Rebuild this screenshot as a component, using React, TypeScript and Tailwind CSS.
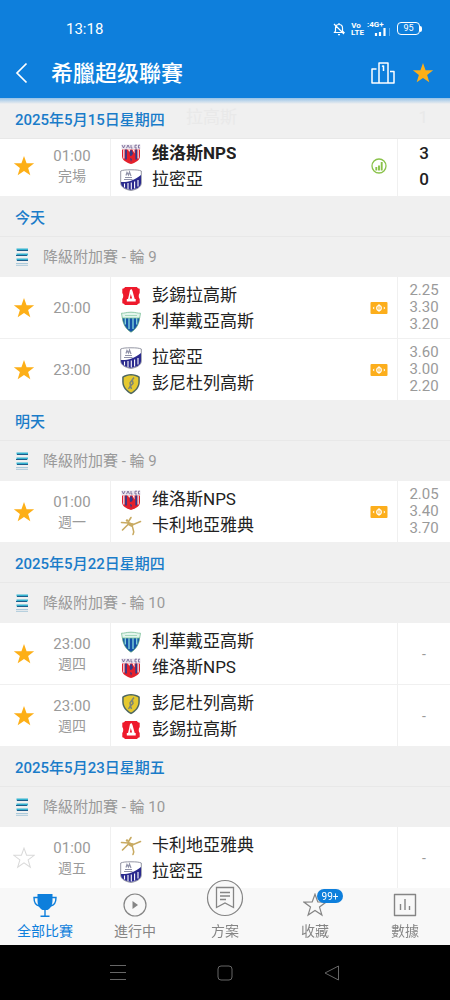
import type { ReactNode } from "react";

type TeamId = "volos" | "lamia" | "panserraikos" | "levadiakos" | "panetolikos" | "kallithea";

interface Match {
  time: string;
  note?: string;
  home: TeamId;
  away: TeamId;
  starred: boolean;
  score?: [number, number];
  odds?: [string, string, string];
}

interface Section {
  date: string;
  round?: string;
  matches: Match[];
}

const TEAM_NAMES: Record<TeamId, string> = {
  volos: "维洛斯NPS",
  lamia: "拉密亞",
  panserraikos: "彭錫拉高斯",
  levadiakos: "利華戴亞高斯",
  panetolikos: "彭尼杜列高斯",
  kallithea: "卡利地亞雅典",
};

const SECTIONS: Section[] = [
  {
    date: "2025年5月15日星期四",
    matches: [{ time: "01:00", note: "完場", home: "volos", away: "lamia", starred: true, score: [3, 0] }],
  },
  {
    date: "今天",
    round: "降級附加賽 - 輪 9",
    matches: [
      { time: "20:00", home: "panserraikos", away: "levadiakos", starred: true, odds: ["2.25", "3.30", "3.20"] },
      { time: "23:00", home: "lamia", away: "panetolikos", starred: true, odds: ["3.60", "3.00", "2.20"] },
    ],
  },
  {
    date: "明天",
    round: "降級附加賽 - 輪 9",
    matches: [
      { time: "01:00", note: "週一", home: "volos", away: "kallithea", starred: true, odds: ["2.05", "3.40", "3.70"] },
    ],
  },
  {
    date: "2025年5月22日星期四",
    round: "降級附加賽 - 輪 10",
    matches: [
      { time: "23:00", note: "週四", home: "levadiakos", away: "volos", starred: true },
      { time: "23:00", note: "週四", home: "panetolikos", away: "panserraikos", starred: true },
    ],
  },
  {
    date: "2025年5月23日星期五",
    round: "降級附加賽 - 輪 10",
    matches: [{ time: "01:00", note: "週五", home: "kallithea", away: "lamia", starred: false }],
  },
];

const STAR_PATH = "M12 1.2l2.8 7.700 8.300.2-6.600 5 2.400 8L12 17.400l-6.900 4.700 2.400-8-6.600-5 8.300-.2z";

function Star({ filled }: { filled: boolean }) {
  return (
    <svg viewBox="0 0 24 24" className="size-[22px]">
      <path d={STAR_PATH} fill={filled ? "#fdaf17" : "none"} stroke={filled ? "none" : "#d9d9d9"} strokeWidth="1.1" />
    </svg>
  );
}

function Crest({ team }: { team: TeamId }) {
  switch (team) {
    case "volos":
      return (
        <svg viewBox="0 0 22 22" className="size-[22px]">
          <path d="M1.500 1.500h19v4.500h-19z" fill="#ebe6ef" />
          <path d="M2 2l1.500 3L5 2M6.500 5.200L8 2l1.500 3.200M11 2v3h1.500M17 2.200h-2V5h2M20 2.200h-1.500V5H20" fill="none" stroke="#6a5a8c" strokeWidth=".8" />
          <path d="M2 6.500h18V13c0 4-4 6.500-9 8-5-1.500-9-4-9-8z" fill="#e3202c" />
          <path d="M3.800 6.500v9M18.200 6.500v9" stroke="#e9e2ef" strokeWidth="1.300" />
          <path d="M6 6.500v10M16.200 6.500v10" stroke="#2a3c8c" strokeWidth="1.700" />
          <path d="M8 6.500h2l-.5 3zM12.500 6.500H14.500v4z" fill="#fff" />
          <path d="M9.500 8.500l2-2 1.500 4-1 2-2 .5zM10 15l2 1-1 3z" fill="#343a86" />
        </svg>
      );
    case "lamia":
      return (
        <svg viewBox="0 0 22 22" className="size-[22px]">
          <path d="M.7 2C3 1 6 .8 11 .8s8 .2 10.300 1.200v12c0 4-4.500 6.500-10.300 7.500C5.200 20.500.7 18 .7 14z" fill="#fff" stroke="#888a98" strokeWidth=".9" />
          <path d="M21 6v8c0 4-4.500 6-10 7-5.500-1-10-3-10-7v-1c6 .5 13-1.500 20-7z" fill="#2a2a8e" />
          <path d="M4.500 14.500v4M8 14v6M11.300 13.500v7M14.600 12.500v7M18 11v6.500" stroke="#fff" strokeWidth="1.100" />
          <path d="M4 10.500h8.500M5 8.500h7M6 6.500l1-3 1.500 2.500 1-3 1.500 4" stroke="#9092a8" fill="none" strokeWidth="1.200" />
        </svg>
      );
    case "panserraikos":
      return (
        <svg viewBox="0 0 22 22" className="size-[22px]">
          <path d="M5 2h12c.5 1 1.300 1.500 2.700 1.800V8c-1.300 1.500-1.300 4.500 0 6v4.200c-1.400.3-2.200.8-2.700 1.800H5c-.5-1-1.300-1.500-2.700-1.800V14c1.300-1.500 1.300-4.500 0-6V3.800C3.700 3.500 4.500 3 5 2z" fill="#ee1a2c" />
          <path d="M10 5l1.500-1 1 2 2.200 8h1v2.500H6.800V14H8l1-4z" fill="#fff" />
          <path d="M10.800 9l1.300 4.500H9.800z" fill="#ee1a2c" />
        </svg>
      );
    case "levadiakos":
      return (
        <svg viewBox="0 0 22 22" className="size-[22px]">
          <path d="M2.500 6h17c0 6-3 12-8.500 15.200C5.500 18 2.500 12 2.500 6z" fill="#1553a8" stroke="#4b9a6c" strokeWidth=".7" />
          <path d="M5.300 7v6.500M9 7v11M13 7v11M16.700 7v6.500" stroke="#7fd0d8" strokeWidth="1.400" />
          <path d="M1.500 2.200C4 2.500 6 1.200 11 1.200s7 1.300 9.500 1l-.8 4.800H2.300z" fill="#e3f5ec" stroke="#7abf98" strokeWidth=".8" />
          <path d="M5 4.500h12" stroke="#a5d8bd" />
        </svg>
      );
    case "panetolikos":
      return (
        <svg viewBox="0 0 22 22" className="size-[22px]">
          <path d="M11 1C14 1 17.500 1.800 19.800 3.800V9c0 5.500-3.800 9.500-8.800 12.200C6 18.500 2.200 14.500 2.200 9V3.800C4.500 1.800 8 1 11 1z" fill="#4d6660" />
          <path d="M11 2.400c2.600 0 5.500.6 7.300 2.100V9c0 4.700-3.200 8.200-7.300 10.600C6.900 17.200 3.700 13.700 3.700 9V4.500C5.500 3 8.400 2.400 11 2.400z" fill="#e5c92f" />
          <path d="M14 4.500l-1.500 2-2.500 3.500.5 2.500L8.500 16M12.500 7.500l.5 3-2.500 2.500 1 3" fill="none" stroke="#7d8676" strokeWidth="1.500" />
        </svg>
      );
    case "kallithea":
      return (
        <svg viewBox="0 0 22 22" className="size-[22px]">
          <path d="M8.500 6.500L11 2.500M1.500 7.500l7 .5 5 1.500 7-3M8.500 9l-6 6M12.500 9.500c-1.500 3.500 3 5 .5 10" fill="none" stroke="#c8aa62" strokeWidth="1.600" strokeLinecap="round" />
          <path d="M7 6.500l7.500 2.500-3 3-3.500-2z" fill="#c8aa62" />
          <circle cx="7" cy="5.500" r="1.200" fill="#c8aa62" />
        </svg>
      );
  }
}

function StageLogo() {
  return (
    <svg viewBox="0 0 14 18" className="h-[18px] w-3.5">
      <path d="M1.500 1.500h11.500M1.500 6.500h11.500M1.500 11.500h11.500" stroke="#35b3d0" strokeWidth="2.200" />
      <path d="M2 2.500h11M1 7.500h11M2 12.500h11" stroke="#1f5c8a" strokeWidth="1" />
      <path d="M1 15.500h12M1 17.300h12" stroke="#a9c9da" strokeWidth="1" />
    </svg>
  );
}

function StatsIcon() {
  return (
    <svg viewBox="0 0 16 16" className="size-4">
      <circle cx="8" cy="8" r="7" fill="none" stroke="#8ac24a" strokeWidth="1.300" />
      <path d="M5.300 9v3.500M8 7.500v5M10.700 4v8.500" stroke="#8ac24a" strokeWidth="1.900" />
    </svg>
  );
}

function OddsIcon() {
  return (
    <svg viewBox="0 0 18 14" className="h-3.5 w-[18px]">
      <rect x=".5" y="1" width="17" height="12" rx="1" fill="#fcae1c" />
      <ellipse cx="9" cy="7" rx="2.300" ry="2.500" fill="none" stroke="#fff" strokeWidth="1.200" />
      <path d="M9 3v8" stroke="#fff" />
      <path d="M4.200 5.500L2.700 7l1.500 1.500zM13.800 5.500L15.300 7l-1.500 1.500z" fill="#fff" />
    </svg>
  );
}

function MatchRow({ match }: { match: Match }) {
  return (
    <li className="flex h-[62px] items-stretch border-b border-[#f0f0f0] bg-white">
      <div className="flex w-[111px] shrink-0 items-center border-r border-[#f0f0f0]">
        <button type="button" aria-label="收藏" aria-pressed={match.starred} className="flex w-12 justify-center">
          <Star filled={match.starred} />
        </button>
        <div className="w-12 text-center text-[#9a9a9a]">
          <div className="text-[15px] leading-5">{match.time}</div>
          {match.note && <div className="text-sm leading-5">{match.note}</div>}
        </div>
      </div>
      <div className="flex min-w-0 flex-1 flex-col justify-center pt-0.5 pl-[9px] text-[17px] text-[#222]">
        {[match.home, match.away].map((team, i) => (
          <div key={team} className="flex h-[26px] items-center gap-2.5">
            <Crest team={team} />
            <span className={match.score && i === 0 ? "truncate font-bold" : "truncate"}>{TEAM_NAMES[team]}</span>
          </div>
        ))}
      </div>
      <div className="flex w-9 shrink-0 items-center justify-center">
        {match.score && <StatsIcon />}
        {match.odds && <OddsIcon />}
      </div>
      <div className="flex w-[53px] shrink-0 flex-col items-center justify-center border-l border-[#f0f0f0]">
        {match.score?.map((goals, i) => (
          <span key={i} className="text-[17px] leading-[26px] font-medium text-[#222]">{goals}</span>
        ))}
        {match.odds?.map((value) => (
          <span key={value} className="text-[15px] leading-[17px] text-[#9a9a9a]">{value}</span>
        ))}
        {!match.score && !match.odds && <span className="text-sm text-[#9a9a9a]">-</span>}
      </div>
    </li>
  );
}

function StatusBar() {
  return (
    <div className="flex h-[57px] items-center justify-between pr-[28px] pl-[66px]">
      <span className="pt-0.5 text-[15px]">13:18</span>
      <div className="flex items-center gap-1.5">
        <svg viewBox="0 0 12 14" className="h-3.5 w-3">
          <path d="M1.500 10.500h9.500L9.500 9V6C9.500 4 8 2.500 6 2.500S2.500 4 2.500 6v3zM5 12.700h2M6 1v1.500M1 2l10 10" fill="none" stroke="currentColor" strokeWidth="1.200" />
        </svg>
        <span className="flex w-2.5 flex-col text-center text-[8px] leading-[7px] font-bold">
          <span>Vo</span>
          <span>LTE</span>
        </span>
        <div className="flex w-6 flex-col">
          <span className="text-[8px] leading-[7px] font-bold">:4G+</span>
          <svg viewBox="0 0 24 8" className="h-2 w-6">
            <path d="M9 8V5M13 8V4M17.500 8V0" stroke="currentColor" strokeWidth="2.200" />
            <path d="M22.500 8V0" stroke="#5aa8ea" />
          </svg>
        </div>
        <span className="flex items-center">
          <span className="flex h-[13px] w-[23px] items-center justify-center rounded-[4px] border border-white text-[9px]">95</span>
          <span className="h-1.5 w-0.5 rounded-r-sm bg-white" />
        </span>
      </div>
    </div>
  );
}

function TitleBar() {
  return (
    <div className="flex h-8 items-center pr-4 pl-3">
      <button type="button" aria-label="返回" className="w-[39px]">
        <svg viewBox="0 0 20 24" className="h-6 w-5">
          <path d="M14.500 2.500L5 12l9.500 9.500" fill="none" stroke="currentColor" strokeWidth="1.700" />
        </svg>
      </button>
      <h1 className="flex-1 text-[22px] font-medium">希臘超级聯賽</h1>
      <button type="button" aria-label="積分榜" className="mr-4">
        <svg viewBox="0 0 26 24" className="h-6 w-[26px]">
          <path d="M9 22V2h9v20M6.500 8H2v14h22V10.500h-4M13.500 4.500V10M13.500 4.500L12 5.500" fill="none" stroke="currentColor" strokeWidth="1.500" strokeLinejoin="round" />
        </svg>
      </button>
      <button type="button" aria-label="收藏聯賽">
        <Star filled />
      </button>
    </div>
  );
}

function Tab({ label, active, children }: { label: string; active?: boolean; children: ReactNode }) {
  return (
    <a
      href="#"
      aria-current={active ? "page" : undefined}
      className={
        active
          ? "flex h-[57px] flex-col items-center justify-end gap-1 pb-1 text-[#0e7fdc]"
          : "flex h-[57px] flex-col items-center justify-end gap-1 pb-1 text-[#858585]"
      }
    >
      {children}
      <span className="text-sm leading-5">{label}</span>
    </a>
  );
}

function TabBar() {
  return (
    <nav className="relative z-10 grid shrink-0 grid-cols-5 bg-[#f8f8f8]">
      <Tab label="全部比賽" active>
        <svg viewBox="0 0 24 24" className="size-6">
          <path d="M4.500 1h15v6c0 5-1.500 8-5 10h-5c-3.500-2-5-5-5-10z" fill="currentColor" />
          <path d="M5 4.500H1c0 5 1.500 8 5.500 8.500M19 4.500h4c0 5-1.500 8-5.500 8.500M12 16v7M7.500 23.200h9" fill="none" stroke="currentColor" strokeWidth="1.400" />
        </svg>
      </Tab>
      <Tab label="進行中">
        <svg viewBox="0 0 24 24" className="size-6">
          <circle cx="12" cy="12" r="11" fill="none" stroke="currentColor" strokeWidth="1.200" />
          <path d="M9.500 8l5.500 4-5.500 4z" fill="currentColor" />
        </svg>
      </Tab>
      <Tab label="方案">
        <svg viewBox="0 0 38 38" className="size-[38px] shrink-0">
          <circle cx="19" cy="19" r="17.500" fill="#f8f8f8" stroke="currentColor" strokeWidth="1.200" />
          <path d="M10.500 8.500h17v20L19 24l-8.500 4.500zM14 13.500h10M14 17h10M14 20.500h6" fill="none" stroke="currentColor" strokeWidth="1.300" />
        </svg>
      </Tab>
      <Tab label="收藏">
        <span className="relative">
          <svg viewBox="0 0 24 24" className="size-6">
            <path d={STAR_PATH} fill="none" stroke="currentColor" strokeWidth="1.200" />
          </svg>
          <span className="absolute -top-1 left-3.5 flex h-3.5 w-[26px] items-center justify-center rounded-full bg-[#0e7fdc] text-[10px] text-white">
            99+
          </span>
        </span>
      </Tab>
      <Tab label="數據">
        <svg viewBox="0 0 24 24" className="size-6">
          <path d="M1.500 1.500h21v21h-21zM7.500 17v-6M12 17V6M16.500 17v-4" fill="none" stroke="currentColor" strokeWidth="1.400" strokeLinejoin="round" />
        </svg>
      </Tab>
    </nav>
  );
}

function SystemNav() {
  return (
    <div className="grid h-[55px] shrink-0 grid-cols-3 place-items-center bg-black px-16 text-[#666]">
      <button type="button" aria-label="選單">
        <svg viewBox="0 0 18 18" className="size-[18px]">
          <path d="M1 1.500h16M1 8.500h16M1 15.500h16" stroke="currentColor" />
        </svg>
      </button>
      <button type="button" aria-label="主畫面">
        <svg viewBox="0 0 18 18" className="size-[18px]">
          <rect x="2" y="2" width="14" height="14" rx="3" fill="none" stroke="currentColor" />
        </svg>
      </button>
      <button type="button" aria-label="上一頁">
        <svg viewBox="0 0 18 18" className="size-[18px]">
          <path d="M15.500 2v14L2 9z" fill="none" stroke="currentColor" strokeLinejoin="round" />
        </svg>
      </button>
    </div>
  );
}

export default function App() {
  return (
    <div className="flex h-screen flex-col overflow-hidden bg-[#f0f0f0] font-['Roboto','Noto_Sans_CJK_SC',sans-serif]">
      <header className="relative z-20 shrink-0 bg-[#0e7fdc] pb-[9px] text-white">
        <StatusBar />
        <TitleBar />
        <div className="absolute inset-x-0 top-full h-1.5 bg-linear-to-b from-[#0e7fdc]/40 to-transparent" />
      </header>

      <main className="min-h-0 flex-1 overflow-y-auto [scrollbar-width:none]">
        {SECTIONS.map((section, i) => (
          <section key={section.date}>
            {i === 0 ? (
              <div className="sticky top-0 z-10 -mb-1 flex h-[41px] items-center border-b border-[#e8e8e8] bg-[#f0f0f0] px-[15px] pt-1">
                {/* previous row showing faintly through the pinned date */}
                <div aria-hidden="true" className="absolute inset-y-0 right-[22px] left-[186px] flex items-center justify-between text-[17px] text-[#e9e9e9]">
                  <span>拉高斯</span>
                  <span>1</span>
                </div>
                <h2 className="text-[15px] font-medium text-[#1a7cc9]">{section.date}</h2>
              </div>
            ) : (
              <h2 className="flex h-10 items-center border-b border-[#e8e8e8] px-[15px] pt-1 text-[15px] font-medium text-[#1a7cc9]">
                {section.date}
              </h2>
            )}
            {section.round && (
              <div className="flex h-10 items-center gap-3.5 px-[15px] text-[15px] text-[#9a9a9a]">
                <StageLogo />
                <span>{section.round}</span>
              </div>
            )}
            <ul>
              {section.matches.map((match) => (
                <MatchRow key={match.home + match.time} match={match} />
              ))}
            </ul>
          </section>
        ))}
      </main>

      <TabBar />
      <SystemNav />
    </div>
  );
}
